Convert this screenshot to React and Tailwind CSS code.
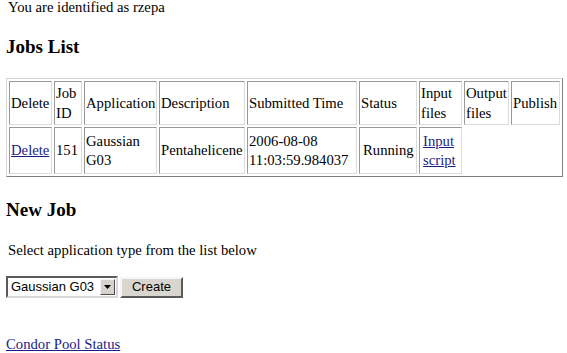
const headers = [
  ["Delete", "w-[43px]"],
  ["Job ID", "w-[28px]"],
  ["Application", "w-[73px]"],
  ["Description", "w-[86px]"],
  ["Submitted Time", "w-[110px]"],
  ["Status", "w-[58px]"],
  ["Input files", "w-[43px]"],
  ["Output files", "w-[45px]"],
  ["Publish", "w-[49px]"]
];

const cell = "border border-t-[#9a9a9a] border-l-[#9a9a9a] border-b-[#dcdcdc] border-r-[#dcdcdc] p-[1px] align-middle text-left font-normal";
const link = "text-[#1c1c86] underline";

export default function App() {
  return (
    <div className="min-h-screen bg-white pl-[6px] text-black font-['Liberation_Serif',serif] text-[14.7px] leading-[17px]">
      <div className="mt-[-1px] ml-[2px]">You are identified as rzepa</div>
      <h3 className="mt-[20px] text-[19px] font-bold leading-[22px]">Jobs List</h3>

      <table className="mt-[20px] w-[557px] table-fixed border-separate border-spacing-[2px] border border-t-[#d4d4d4] border-l-[#d4d4d4] border-b-[#808080] border-r-[#808080]">
        <thead>
          <tr className="h-[44px] leading-[20px]">
            {headers.map(([label, w]) => (
              <th key={label} className={`${cell} ${w}`}>{label}</th>
            ))}
          </tr>
        </thead>
        <tbody>
          <tr className="h-[47px] leading-[19px]">
            <td className={cell}><a href="#" className={link}>Delete</a></td>
            <td className={cell}>151</td>
            <td className={cell}>Gaussian G03</td>
            <td className={cell}>Pentahelicene</td>
            <td className={cell}>2006-08-08 11:03:59.984037</td>
            <td className={`${cell} pl-[3px]`}>Running</td>
            <td className={`${cell} pl-[3px]`}><a href="#" className={link}>Input script</a></td>
          </tr>
        </tbody>
      </table>

      <h3 className="mt-[22px] text-[19px] font-bold leading-[22px]">New Job</h3>
      <div className="mt-[21px] ml-[2px]">Select application type from the list below</div>

      <div className="mt-[17px] flex items-center gap-[2px] font-['Liberation_Sans',sans-serif] text-[13px]">
        <div className="flex h-[22px] w-[112px] items-center border-2 border-t-[#5a5a5a] border-l-[#5a5a5a] border-b-[#d8d8d8] border-r-[#d8d8d8] bg-white">
          <span className="flex-1 pl-[3px] leading-[16px]">Gaussian G03</span>
          <span className="mr-[1px] flex h-[16px] w-[15px] items-center justify-center border border-t-[#f4f4f4] border-l-[#f4f4f4] border-b-[#505050] border-r-[#505050] bg-[#d6d3cc]">
            <svg width="7" height="4" viewBox="0 0 7 4"><path d="M0 0h7L3.5 4z" fill="#000" /></svg>
          </span>
        </div>
        <button className="h-[21px] w-[63px] border-2 border-t-[#f6f6f6] border-l-[#f6f6f6] border-b-[#5a5a5a] border-r-[#5a5a5a] bg-[#d8d6cf] leading-[16px]">Create</button>
      </div>

      <div className="mt-[38px]"><a href="#" className={link}>Condor Pool Status</a></div>
    </div>
  );
}
